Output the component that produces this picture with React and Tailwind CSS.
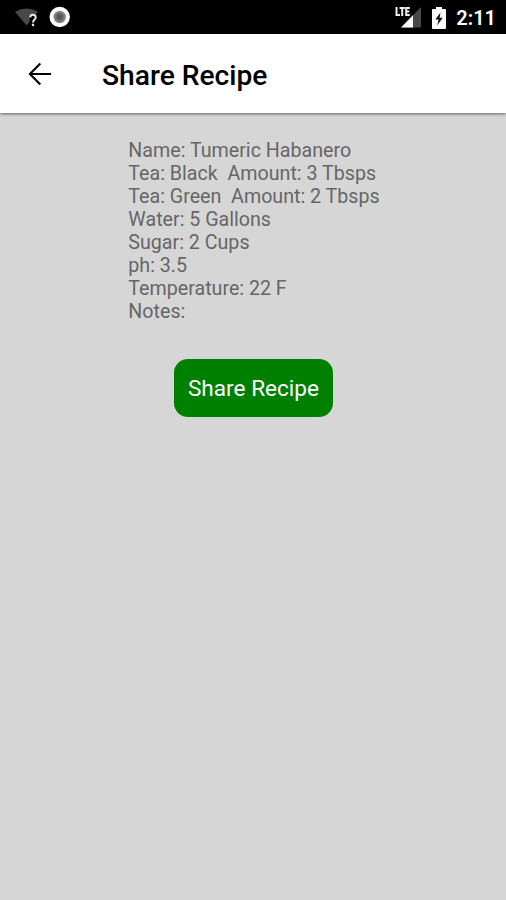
import React from 'react';

const recipeLines = [
  'Name: Tumeric Habanero',
  'Tea: Black  Amount: 3 Tbsps',
  'Tea: Green  Amount: 2 Tbsps',
  'Water: 5 Gallons',
  'Sugar: 2 Cups',
  'ph: 3.5',
  'Temperature: 22 F',
  'Notes:',
];

const WifiIcon = () => (
  <svg width="24" height="20" viewBox="0 0 24 20">
    <path d="M0 4.7 Q11.5 -1.5 23 4.7 L20.5 7.4 Q15 7.4 14.6 12 V15 L11.5 18.5 Z" fill="#484848" />
    <path d="M15.2 10.3 Q15.4 7.8 18 7.8 Q20.7 7.8 20.7 10.3 Q20.7 11.7 19.1 13 Q18 13.9 18 15.5" fill="none" stroke="#e8e8e8" strokeWidth="2" />
    <rect x="16.9" y="16.7" width="2.2" height="2.4" fill="#e8e8e8" />
  </svg>
);

const RecordIcon = () => (
  <svg width="22" height="22" viewBox="0 0 22 22">
    <circle cx="10.7" cy="11" r="8.2" fill="#858585" stroke="#fff" strokeWidth="4" />
    <circle cx="10.7" cy="11" r="4.2" fill="#686868" />
    <circle cx="10.7" cy="11" r="2.4" fill="#555" />
  </svg>
);

const SignalIcon = () => (
  <svg width="28" height="22" viewBox="0 0 28 22">
    <path d="M6 21.5 L26 1 V21.5 Z" fill="#484848" />
    <path d="M6 21.5 L18 9.3 V21.5 Z" fill="#fff" />
    {/* LTE badge */}
    <path d="M0 0 H15.5 V11 H0 Z" fill="#000" />
    <path d="M1.5 1 V9.1 H5 M4.5 2 H9.8 M7.2 2 V10 M14.8 2 H11.2 V9.1 H14.8 M11.2 5.5 H14.3" fill="none" stroke="#eee" strokeWidth="2" />
  </svg>
);

const BatteryIcon = () => (
  <svg width="14" height="22" viewBox="0 0 14 22">
    <path d="M4 0 H10 V2 H13 Q14 2 14 3 V21 Q14 22 13 22 H1 Q0 22 0 21 V3 Q0 2 1 2 H4 Z" fill="#fff" />
    <path d="M8.5 5.5 L3.3 12.6 H6.6 L5.2 18.5 L10.7 10.8 H7.6 Z" fill="#111" />
  </svg>
);

const StatusBar = () => (
  <div className="flex h-[34px] items-center justify-between bg-black pl-[15px] pr-[10px]">
    <div className="flex items-center gap-[10px]">
      <WifiIcon />
      <RecordIcon />
    </div>
    <div className="flex items-center">
      <SignalIcon />
      <div className="ml-[9px] mr-[10px] pt-px">
        <BatteryIcon />
      </div>
      <span className="pt-[2px] text-[20px] font-semibold leading-none text-white">2:11</span>
    </div>
  </div>
);

const Header = () => (
  <header className="flex h-[79px] items-center bg-white pl-[28px] shadow-[0_1px_3px_rgba(0,0,0,0.55)]">
    <svg width="24" height="24" viewBox="0 0 24 24" fill="none" stroke="#000" strokeWidth="2.1">
      <path d="M12.3 1.5 L1.9 12 L12.3 22.5 M1.9 12 H23" />
    </svg>
    <h1 className="ml-[50px] pt-[5px] text-[28.2px] font-medium leading-none text-black">Share Recipe</h1>
  </header>
);

export default function App() {
  return (
    <div className="flex h-[900px] w-[506px] flex-col overflow-hidden bg-[#d6d6d6] font-['Roboto',sans-serif]">
      <StatusBar />
      <Header />
      <main className="flex flex-col items-center pl-px pt-[26px]">
        <div className="whitespace-pre pl-px text-[19.65px] leading-[23px] text-[#666]">
          {recipeLines.map((line) => (
            <p key={line}>{line}</p>
          ))}
        </div>
        <button className="mt-[36px] h-[58px] w-[159px] rounded-[14px] bg-[#008000] pt-[2px] text-[22.6px] text-white">
          Share Recipe
        </button>
      </main>
    </div>
  );
}
